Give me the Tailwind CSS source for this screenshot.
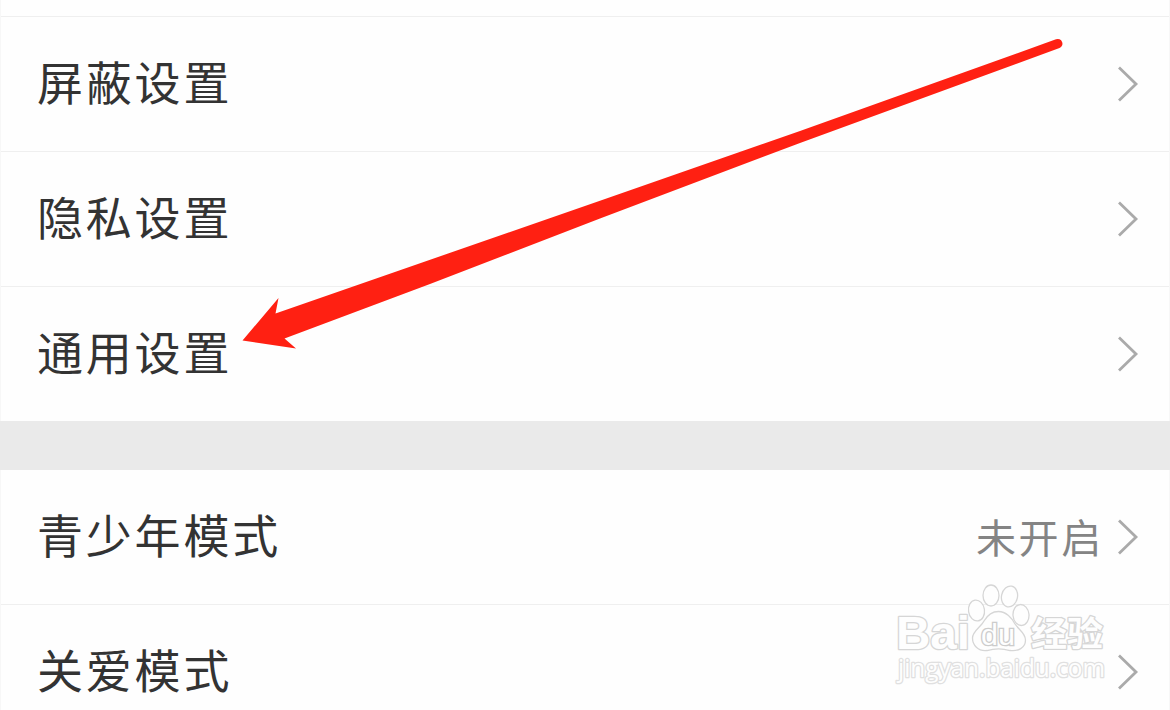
<!DOCTYPE html>
<html lang="zh-CN">

<head>
  <meta charset="UTF-8">
  <meta name="viewport" content="width=device-width, initial-scale=1.0">
  <title>设置</title>
  <script src="https://cdn.jsdelivr.net/npm/@tailwindcss/browser@4"></script>
</head>

<body class="relative w-[1170px] h-[710px] overflow-hidden bg-[#fefefe] text-[#333] font-['Noto_Sans_CJK_SC',sans-serif]">

  <!-- Settings list -->
  <main class="flex flex-col h-[740px] border-x border-[#f7f7f7]">
    <div class="h-[17px] border-b border-[#efefef] shrink-0"></div>

    <a href="#" class="flex items-center justify-between h-[135px] shrink-0 border-b border-[#efefef] pl-[36px] pr-[30px]">
      <span class="text-[46px] leading-none tracking-[2.8px] pb-[8px]">屏蔽设置</span>
      <svg class="w-[22px] h-[38px]" viewBox="0 0 22 38" fill="none" stroke="#aaa" stroke-width="2.8"><path d="M2 2.5 19 19 2 35.5" /></svg>
    </a>
    <a href="#" class="flex items-center justify-between h-[135px] shrink-0 border-b border-[#efefef] pl-[36px] pr-[30px]">
      <span class="text-[46px] leading-none tracking-[2.8px] pb-[8px]">隐私设置</span>
      <svg class="w-[22px] h-[38px]" viewBox="0 0 22 38" fill="none" stroke="#aaa" stroke-width="2.8"><path d="M2 2.5 19 19 2 35.5" /></svg>
    </a>
    <a href="#" class="flex items-center justify-between h-[134px] shrink-0 pl-[36px] pr-[30px]">
      <span class="text-[46px] leading-none tracking-[2.8px] pb-[8px]">通用设置</span>
      <svg class="w-[22px] h-[38px]" viewBox="0 0 22 38" fill="none" stroke="#aaa" stroke-width="2.8"><path d="M2 2.5 19 19 2 35.5" /></svg>
    </a>

    <div class="h-[49px] shrink-0 -mx-px bg-[#eaeaea]"></div>

    <a href="#" class="flex items-center justify-between h-[135px] shrink-0 border-b border-[#efefef] pl-[36px] pr-[30px]">
      <span class="text-[46px] leading-none tracking-[2.8px] pb-[8px]">青少年模式</span>
      <span class="flex items-center gap-[13px]">
        <span class="text-[40px] leading-none tracking-[2.7px] pb-[3px] text-[#848484]">未开启</span>
        <svg class="w-[22px] h-[38px]" viewBox="0 0 22 38" fill="none" stroke="#aaa" stroke-width="2.8"><path d="M2 2.5 19 19 2 35.5" /></svg>
      </span>
    </a>
    <a href="#" class="flex items-center justify-between h-[134px] shrink-0 pl-[36px] pr-[30px]">
      <span class="text-[46px] leading-none tracking-[2.8px] pb-[8px]">关爱模式</span>
      <svg class="w-[22px] h-[38px]" viewBox="0 0 22 38" fill="none" stroke="#aaa" stroke-width="2.8"><path d="M2 2.5 19 19 2 35.5" /></svg>
    </a>
  </main>

  <!-- Watermark -->
  <svg class="absolute left-[890px] top-[580px] w-[220px] h-[112px]" viewBox="890 580 220 112" fill="#fefefe" stroke="#d6d6d6" stroke-width="1.3">
    <g paint-order="stroke" stroke-width="2.6" stroke-linejoin="round">
      <text x="896" y="649" font-family="Liberation Sans" font-weight="700" font-size="46" textLength="74" lengthAdjust="spacingAndGlyphs">Bai</text>
      <text x="1031" y="646" font-family="Noto Sans CJK SC" font-weight="700" font-size="34" textLength="72" lengthAdjust="spacingAndGlyphs">经验</text>
      <text x="898" y="677" font-family="Open Sans" font-size="25" textLength="207" lengthAdjust="spacingAndGlyphs" stroke="#e0e0e0">jingyan.baidu.com</text>
    </g>
    <ellipse cx="976.5" cy="610.5" rx="8" ry="10.5" transform="rotate(-8 976.5 610.5)" />
    <ellipse cx="991" cy="595.5" rx="8" ry="10.5" />
    <ellipse cx="1009.5" cy="596.5" rx="8" ry="10.5" transform="rotate(12 1009.5 596.5)" />
    <ellipse cx="1021" cy="615" rx="8" ry="10.5" transform="rotate(-5 1021 615)" />
    <path d="M998.5 611.5C1006 611.5 1012 618 1015 624C1018 629 1025.5 633 1025.5 640C1025.5 648 1018 651.5 1010 650.5C1003 648.5 994 648.5 987 650.5C978 651.5 972.5 645 972.5 638C972.5 631 981 627 984 621C987 616 991 611.5 998.5 611.5Z" />
    <text x="981" y="644.5" font-family="Liberation Sans" font-size="29" textLength="34" lengthAdjust="spacingAndGlyphs" paint-order="stroke" stroke="#ccc" stroke-width="2.6">du</text>
  </svg>

  <!-- Arrow -->
  <svg class="absolute inset-0 w-[1170px] h-[710px] pointer-events-none" viewBox="0 0 1170 710" fill="#ff2012">
    <path d="M242.5 340.5 278.5 298 275.5 313.5 600 200.7 800 131 1056 39.3A4.6 4.6 0 0 1 1059.5 48L800 143 600 218.5 430 284 284.5 338.5 296 348.5Z" />
  </svg>
</body>

</html>
